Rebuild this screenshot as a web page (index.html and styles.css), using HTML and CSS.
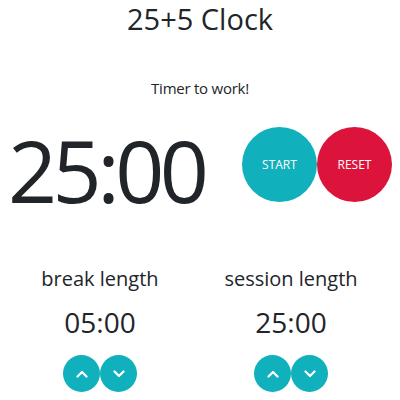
FILE: index.html
```html
<!DOCTYPE html>
<html>
<head>
<meta charset="utf-8">
<link rel="stylesheet" href="styles.css">
</head>
<body>
<main class="app">
  <h1 class="title">25+5 Clock</h1>
  <p class="label">Timer to work!</p>
  <section class="timer-row">
    <div class="time">25:00</div>
    <div class="controls">
      <button class="big-btn start">START</button>
      <button class="big-btn reset">RESET</button>
    </div>
  </section>
  <section class="lengths">
    <div class="length">
      <h2 class="length-title">break length</h2>
      <div class="length-value">05:00</div>
      <div class="arrows">
        <button class="arrow"><svg viewBox="0 0 12 8" width="12" height="8"><path d="M1.5 6.5 L6 2 L10.5 6.5" fill="none" stroke="#fff" stroke-width="2.2" stroke-linecap="round" stroke-linejoin="round"/></svg></button>
        <button class="arrow"><svg viewBox="0 0 12 8" width="12" height="8"><path d="M1.5 1.5 L6 6 L10.5 1.5" fill="none" stroke="#fff" stroke-width="2.2" stroke-linecap="round" stroke-linejoin="round"/></svg></button>
      </div>
    </div>
    <div class="length">
      <h2 class="length-title">session length</h2>
      <div class="length-value">25:00</div>
      <div class="arrows">
        <button class="arrow"><svg viewBox="0 0 12 8" width="12" height="8"><path d="M1.5 6.5 L6 2 L10.5 6.5" fill="none" stroke="#fff" stroke-width="2.2" stroke-linecap="round" stroke-linejoin="round"/></svg></button>
        <button class="arrow"><svg viewBox="0 0 12 8" width="12" height="8"><path d="M1.5 1.5 L6 6 L10.5 1.5" fill="none" stroke="#fff" stroke-width="2.2" stroke-linecap="round" stroke-linejoin="round"/></svg></button>
      </div>
    </div>
  </section>
</main>
</body>
</html>
```
FILE: styles.css
```css
* { box-sizing: border-box; }
html, body { margin: 0; padding: 0; background: #fff; }
body {
  font-family: "Open Sans", "Noto Sans", sans-serif;
  color: #212529;
  width: 400px;
  height: 400px;
  overflow: hidden;
}
.app { display: flex; flex-direction: column; }
.title {
  margin: 0;
  padding-top: 0;
  font-size: 29px;
  font-weight: 400;
  line-height: 38px;
  text-align: center;
}
.label {
  margin: 40px 0 0;
  font-size: 15px;
  line-height: 20px;
  text-align: center;
  letter-spacing: -0.25px;
}
.timer-row {
  display: flex;
  align-items: center;
  margin-top: 28px;
  height: 76px;
}
.time {
  width: 242px;
  padding-left: 8px;
  padding-top: 12px;
  font-size: 86px;
  line-height: 76px;
  letter-spacing: -4.6px;
}
.controls { display: flex; }
.big-btn {
  width: 75px;
  height: 75px;
  border: none;
  border-radius: 50%;
  color: #fff;
  font-family: inherit;
  font-size: 12px;
  padding: 0;
}
.start { background: #11b0bd; }
.reset { background: #dc143c; }
.lengths {
  display: grid;
  grid-template-columns: 200px 182px;
  margin-top: 64px;
}
.length { display: flex; flex-direction: column; align-items: center; }
.length-title {
  margin: 0;
  font-size: 20px;
  font-weight: 400;
  line-height: 26px;
}
.length-value {
  margin-top: 12px;
  font-size: 28px;
  line-height: 36px;
}
.arrows { display: flex; margin-top: 15px; }
.arrow {
  width: 37px;
  height: 37px;
  border: none;
  border-radius: 50%;
  background: #11b0bd;
  padding: 0;
  display: flex;
  align-items: center;
  justify-content: center;
}
```
